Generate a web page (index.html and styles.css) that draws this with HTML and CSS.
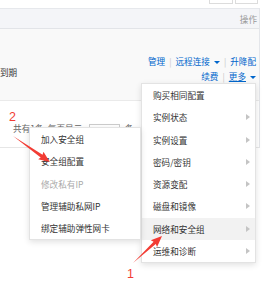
FILE: index.html
```html
<!DOCTYPE html>
<html lang="zh-CN">

<head>
    <meta charset="UTF-8">
    <meta name="viewport" content="width=device-width, initial-scale=1.0">
    <title>实例列表 - 更多操作</title>
    <link rel="stylesheet" href="styles.css">
</head>

<body>
    <div class="page">
        <div class="toolbar">
            <span class="tool-btn"></span>
            <span class="tool-btn wide"></span>
        </div>

        <div class="table">
            <div class="thead">
                <span class="th-op">操作</span>
            </div>
            <div class="trow">
                <span class="expire">到期</span>
                <div class="ops">
                    <div class="ops-line">
                        <a href="#">管理</a><span class="sep">|</span><a href="#">远程连接<i class="caret"></i></a><span class="sep">|</span><a href="#">升降配</a>
                    </div>
                    <div class="ops-line">
                        <a href="#">续费</a><span class="sep">|</span><a href="#" class="more">更多</a><i class="caret"></i>
                    </div>
                </div>
            </div>
            <div class="pager">
                共有1条, 每页显示 <span class="size-box">10</span> 条
            </div>
        </div>

        <!-- dropdown opened from 更多 -->
        <ul class="menu main-menu">
            <li class="menu-item">购买相同配置</li>
            <li class="menu-item has-sub">实例状态</li>
            <li class="menu-item has-sub">实例设置</li>
            <li class="menu-item has-sub">密码/密钥</li>
            <li class="menu-item has-sub">资源变配</li>
            <li class="menu-item has-sub">磁盘和镜像</li>
            <li class="menu-item has-sub active">网络和安全组</li>
            <li class="menu-item has-sub">运维和诊断</li>
        </ul>

        <ul class="menu sub-menu">
            <li class="menu-item">加入安全组</li>
            <li class="menu-item">安全组配置</li>
            <li class="menu-item disabled">修改私有IP</li>
            <li class="menu-item">管理辅助私网IP</li>
            <li class="menu-item">绑定辅助弹性网卡</li>
        </ul>

        <!-- red screenshot annotations -->
        <svg class="marks" width="274" height="287" viewBox="0 0 274 287">
            <text x="9" y="121" class="mark-num">2</text>
            <polygon transform="translate(13,136) rotate(35.1)" points="0,0 35,-1.6 34,-4.6 45,0 34,4.6 35,1.6" />
            <text x="127" y="278" class="mark-num">1</text>
            <polygon transform="translate(133,263) rotate(-42.9)" points="0,0 29.6,-1.6 28.6,-4.6 39.6,0 28.6,4.6 29.6,1.6" />
        </svg>
    </div>
</body>

</html>
```

FILE: styles.css
```css
* {
    margin: 0;
    padding: 0;
    box-sizing: border-box;
}

body {
    font-family: "Noto Sans CJK SC", "Liberation Sans", sans-serif;
    font-size: 8.6px;
    color: #333;
    background: #fff;
}

.page {
    position: relative;
    width: 274px;
    height: 287px;
    overflow: hidden;
}

.toolbar {
    height: 4px;
    margin-bottom: 4px;
    padding-right: 16px;
    display: flex;
    justify-content: flex-end;
    align-items: flex-end;
    gap: 2px;
    overflow: hidden;
}

.tool-btn {
    width: 24px;
    height: 16px;
    flex-shrink: 0;
    border: 1px solid #dcdcdc;
    background: #fff;
}

.tool-btn.wide {
    width: 23px;
}

.table {
    width: 260px;
    border-right: 1px solid #e4e6ea;
}

.thead {
    height: 21px;
    background: #f4f5f8;
    border-top: 1px solid #e6e8ec;
    border-bottom: 1px solid #e2e4e8;
    display: flex;
    align-items: center;
    justify-content: flex-end;
    padding-right: 2px;
}

.th-op {
    color: #999;
}

.trow {
    height: 72px;
    background: #f9f9f9;
    border-bottom: 1px solid #eaeaea;
    display: flex;
    justify-content: space-between;
    align-items: flex-start;
    padding-right: 3px;
}

.expire {
    line-height: 15px;
    margin-top: 36px;
}

.ops {
    margin-top: 25px;
    text-align: right;
}

.ops-line {
    line-height: 15px;
    white-space: nowrap;
}

.ops a {
    color: #06c;
    text-decoration: none;
}

.ops a.more {
    text-decoration: underline;
}

.sep {
    color: #c8c8c8;
    margin: 0 4px;
}

.caret {
    display: inline-block;
    width: 0;
    height: 0;
    margin-left: 4px;
    vertical-align: middle;
    border-top: 3px solid #06c;
    border-left: 3px solid transparent;
    border-right: 3px solid transparent;
}

.pager {
    height: 47px;
    padding: 21px 0 0 13px;
    line-height: 12px;
    color: #666;
    border-bottom: 1px solid #e6e6e6;
    background: #fff;
}

.size-box {
    display: inline-block;
    width: 31px;
    height: 12px;
    margin: 0 3px 0 5px;
    border: 1px solid #ccc;
    color: #06c;
    padding-left: 4px;
    vertical-align: middle;
}

.menu {
    position: absolute;
    list-style: none;
    background: #fff;
    border: 1px solid #e3e3e3;
    box-shadow: 0 2px 6px rgba(0, 0, 0, 0.12);
}

.main-menu {
    left: 141px;
    top: 83px;
    width: 115px;
}

.sub-menu {
    left: 29px;
    top: 127px;
    width: 112px;
}

.menu-item {
    position: relative;
    height: 22.3px;
    line-height: 22.3px;
    padding-left: 11px;
    color: #333;
    white-space: nowrap;
}

.menu-item.active {
    background: #f2f2f2;
}

.menu-item.disabled {
    color: #aaa;
}

.menu-item.has-sub::after {
    content: "";
    position: absolute;
    right: 5px;
    top: 8px;
    border-left: 4px solid #c4c4c4;
    border-top: 3px solid transparent;
    border-bottom: 3px solid transparent;
}

.marks {
    position: absolute;
    left: 0;
    top: 0;
    pointer-events: none;
}

.marks polygon {
    fill: #f23c34;
}

.mark-num {
    font-family: "Liberation Sans", sans-serif;
    font-size: 12.5px;
    fill: #f23c34;
}
```
